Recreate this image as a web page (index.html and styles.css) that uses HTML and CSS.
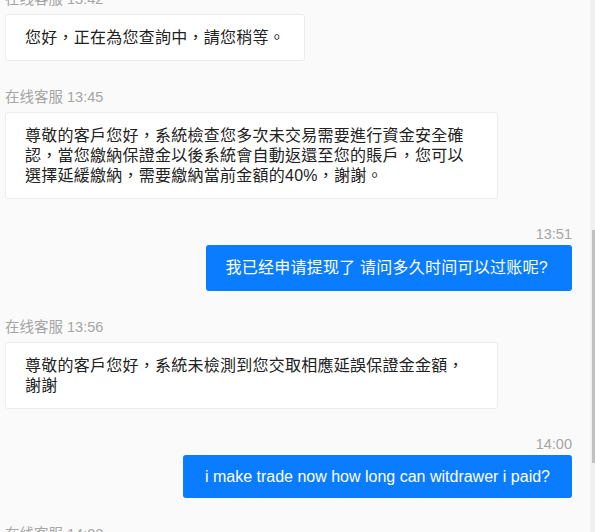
FILE: index.html
```html
<!DOCTYPE html>
<html lang="zh-Hant">
<head>
<meta charset="utf-8">
<title>在线客服</title>
<link rel="stylesheet" href="styles.css">
</head>
<body>
<div class="app">
  <div class="chat">
    <div class="list">
      <div class="msg msg-in">
        <div class="meta">在线客服 13:42</div>
        <div class="bubble bubble-in">您好，正在為您查詢中，請您稍等。</div>
      </div>
      <div class="msg msg-in">
        <div class="meta">在线客服 13:45</div>
        <div class="bubble bubble-in">尊敬的客戶您好，系統檢查您多次未交易需要進行資金安全確認，當您繳納保證金以後系統會自動返還至您的賬戶，您可以選擇延緩繳納，需要繳納當前金額的40%，謝謝。</div>
      </div>
      <div class="msg msg-out">
        <div class="meta">13:51</div>
        <div class="bubble bubble-out">我已经申请提现了 请问多久时间可以过账呢?</div>
      </div>
      <div class="msg msg-in">
        <div class="meta">在线客服 13:56</div>
        <div class="bubble bubble-in">尊敬的客戶您好，系統未檢測到您交取相應延誤保證金金額，謝謝</div>
      </div>
      <div class="msg msg-out">
        <div class="meta">14:00</div>
        <div class="bubble bubble-out bubble-latin">i make trade now how long can witdrawer i paid?</div>
      </div>
      <div class="msg msg-in">
        <div class="meta">在线客服 14:02</div>
      </div>
    </div>
  </div>
  <div class="scrollbar"><div class="thumb"></div></div>
</div>
</body>
</html>
```

FILE: styles.css
```css
html, body {
  margin: 0;
  padding: 0;
  height: 100%;
  overflow: hidden;
}

body {
  background: #fafafa;
  font-family: "Liberation Sans", "Noto Sans CJK SC", "Noto Sans CJK TC", sans-serif;
  color: #333;
}

.app {
  display: flex;
  height: 532px;
}

.chat {
  flex: 1;
  overflow: hidden;
  padding: 0 18px 0 5px;
}

.list {
  display: flex;
  flex-direction: column;
  gap: 25.5px;
  margin-top: -11px;
}

.msg {
  display: flex;
  flex-direction: column;
}

.msg-in {
  align-items: flex-start;
}

.msg-out {
  align-items: flex-end;
}

.meta {
  font-size: 14.5px;
  line-height: 20px;
  color: #a5a5a5;
  margin-bottom: 5px;
  white-space: nowrap;
}

.msg-out .meta {
  margin-bottom: 1px;
}

.bubble {
  font-size: 16px;
  line-height: 20px;
  border-radius: 3px;
  box-sizing: border-box;
}

.bubble-in {
  max-width: 493px;
  background: #fff;
  border: 1px solid #ececec;
  padding: 13px 19px 12px 19px;
  letter-spacing: 0.25px;
  color: #222;
}

.bubble-out {
  background: #0a7cff;
  color: #fff;
  padding: 13px 24px 13px 19px;
  letter-spacing: 0.25px;
}

.bubble-latin {
  padding: 11.5px 22px;
  letter-spacing: 0;
}

.scrollbar {
  width: 5px;
  flex: none;
  background: #f0f0f0;
  display: flex;
  justify-content: flex-end;
}

.thumb {
  width: 3px;
  height: 233px;
  margin-top: 230px;
  background: #c1c1c1;
}
```
